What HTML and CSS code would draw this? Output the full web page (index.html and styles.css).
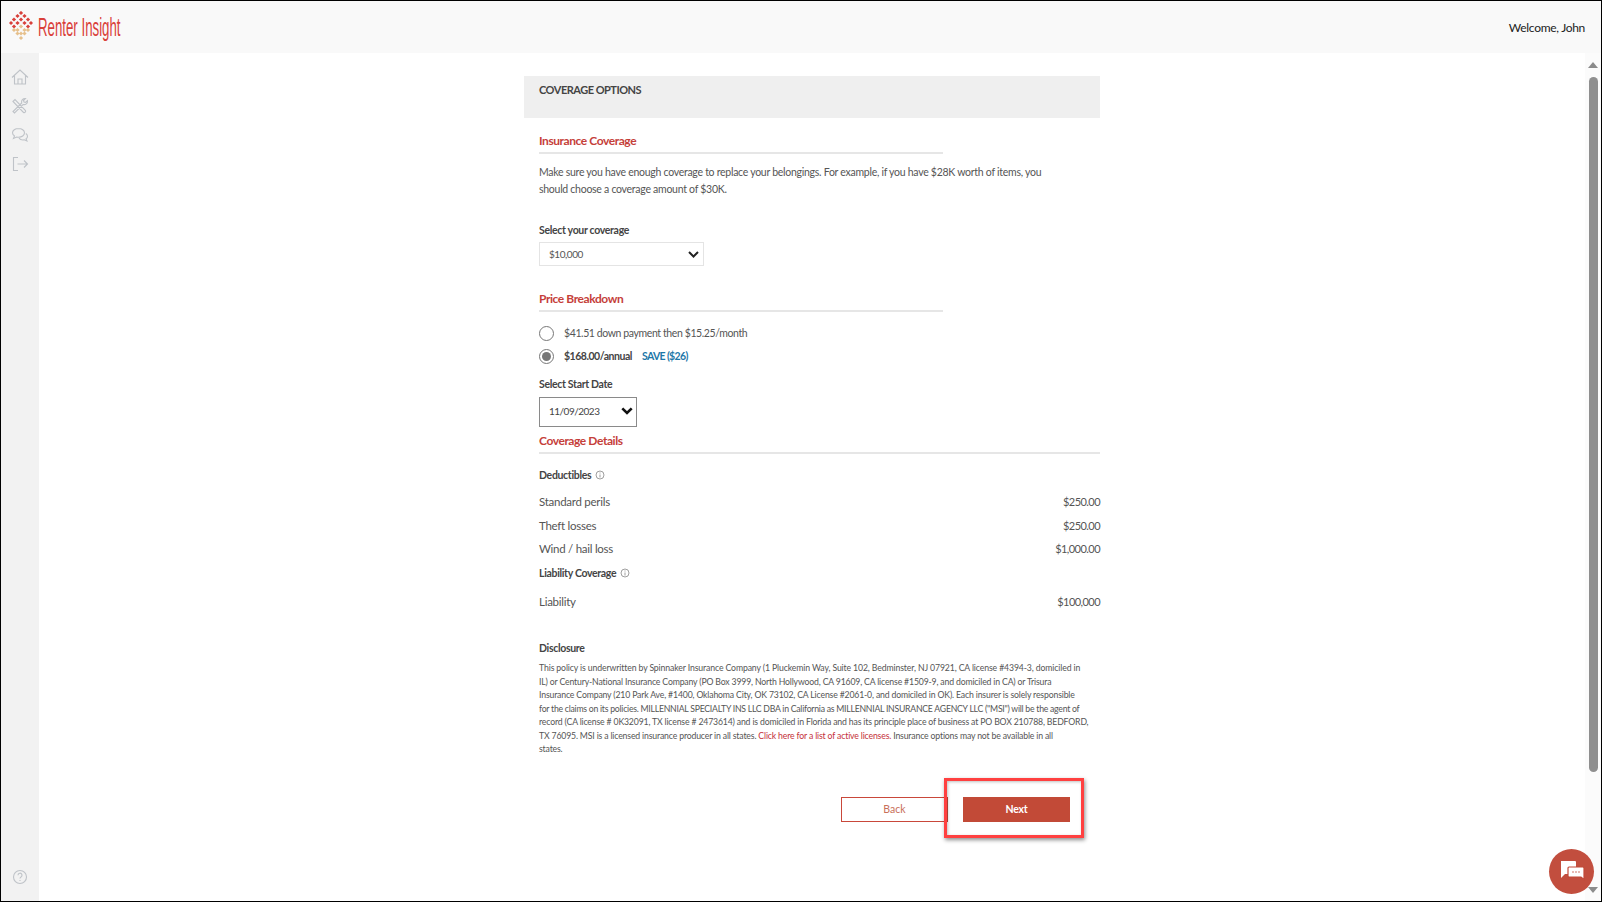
FILE: index.html
```html
<!DOCTYPE html>
<html lang="en">
<head>
<meta charset="utf-8">
<title>Renter Insight</title>
<link rel="stylesheet" href="styles.css">
</head>
<body>
<div class="app">
  <header class="topbar">
    <div class="brand">
      <svg class="logo" width="24" height="30" viewBox="0 0 24 30">
        <g fill="#d8403a">
          <rect x="10.500" y="0.500" width="3" height="3" transform="rotate(45 12 2)"/>
          <rect x="7" y="3.500" width="3" height="3" transform="rotate(45 8.500 5)"/>
          <rect x="14" y="3.500" width="3" height="3" transform="rotate(45 15.500 5)"/>
          <rect x="3.500" y="7" width="3" height="3" transform="rotate(45 5 8.500)"/>
          <rect x="10.500" y="7" width="3" height="3" transform="rotate(45 12 8.500)"/>
          <rect x="17.500" y="7" width="3" height="3" transform="rotate(45 19 8.500)"/>
          <rect x="0.500" y="10.500" width="3" height="3" transform="rotate(45 2 12)"/>
          <rect x="7" y="10.500" width="3" height="3" transform="rotate(45 8.500 12)"/>
          <rect x="14" y="10.500" width="3" height="3" transform="rotate(45 15.500 12)"/>
          <rect x="20.500" y="10.500" width="3" height="3" transform="rotate(45 22 12)"/>
          <rect x="3.500" y="14" width="3" height="3" transform="rotate(45 5 15.500)"/>
          <rect x="17.500" y="14" width="3" height="3" transform="rotate(45 19 15.500)"/>
        </g>
        <g fill="#e6c08c">
          <rect x="10.500" y="14" width="3" height="3" transform="rotate(45 12 15.500)"/>
          <rect x="3.500" y="17.500" width="3" height="3" transform="rotate(45 5 19)"/>
          <rect x="7" y="17.500" width="3" height="3" transform="rotate(45 8.500 19)"/>
          <rect x="14" y="17.500" width="3" height="3" transform="rotate(45 15.500 19)"/>
          <rect x="17.500" y="17.500" width="3" height="3" transform="rotate(45 19 19)"/>
          <rect x="7" y="21" width="3" height="3" transform="rotate(45 8.500 22.500)"/>
          <rect x="10.500" y="21" width="3" height="3" transform="rotate(45 12 22.500)"/>
          <rect x="14" y="21" width="3" height="3" transform="rotate(45 15.500 22.500)"/>
          <rect x="10.500" y="25.500" width="3" height="3" transform="rotate(45 12 27)"/>
        </g>
      </svg>
      <span class="brand-name">Renter Insight</span>
    </div>
    <span class="welcome">Welcome, John</span>
  </header>
  <div class="body-row">
    <nav class="sidebar">
      <div class="nav-top">
        <svg class="nav-icon" viewBox="0 0 18 18"><path d="M1 9.500 9 2l8 7.500M3.500 7.500V16h11V7.500M7 16v-5h4v5"/></svg>
        <svg class="nav-icon" viewBox="0 0 18 18"><path d="M2 4.500 4 2.500l10.500 11a1.500 1.500 0 0 1-2 2zM14.500 1.500a3.500 3.500 0 0 0-3.800 4.500L2 14.500 3.500 16 12 7.500a3.500 3.500 0 0 0 4.500-3.800L14.500 5.500l-1.500-.5-.5-1.500z"/></svg>
        <svg class="nav-icon" viewBox="0 0 18 18"><path d="M7.500 2.500c-3.300 0-6 1.900-6 4.300 0 1.300.8 2.400 2 3.200L2.500 12.500l3.200-1.500c.6.100 1.200.2 1.800.2 3.300 0 6-1.900 6-4.400s-2.700-4.300-6-4.300zM14.800 7.500c1.100.7 1.700 1.700 1.700 2.800 0 1-.5 1.900-1.400 2.500l.8 2.200-2.600-1.200c-2.200.4-4.300-.3-5.300-1.700"/></svg>
        <svg class="nav-icon" viewBox="0 0 18 18"><path d="M7 2.500H2.500v13H7M6.500 9h10M13 5.500 16.500 9 13 12.500"/></svg>
      </div>
      <svg class="nav-icon" viewBox="0 0 18 18"><circle cx="9" cy="9" r="6.500"/><path d="M7 7.200a2 2 0 1 1 3 1.700c-.7.400-1 .8-1 1.600M9 12v1"/></svg>
    </nav>
    <main class="content">
      <div class="column">
        <div class="card-title"><h1>COVERAGE OPTIONS</h1></div>
        <section class="pad">
          <h2 class="section-head narrow">Insurance Coverage</h2>
          <p class="intro">Make sure you have enough coverage to replace your belongings. For example, if you have $28K worth of items, you should choose a coverage amount of $30K.</p>
          <div class="label label-coverage">Select your coverage</div>
          <div class="select">
            <span>$10,000</span>
            <svg width="11" height="7" viewBox="0 0 11 7"><path d="M1 1l4.500 4.500L10 1" fill="none" stroke="#222" stroke-width="2"/></svg>
          </div>
          <h2 class="section-head narrow head-price">Price Breakdown</h2>
          <div class="radio-row first">
            <span class="radio"></span>
            <span class="pay">$41.51 down payment then $15.25/month</span>
          </div>
          <div class="radio-row">
            <span class="radio on"></span>
            <span class="semi">$168.00/annual</span>
            <span class="save">SAVE ($26)</span>
          </div>
          <div class="label label-date">Select Start Date</div>
          <div class="date">
            <span>11/09/2023</span>
            <svg width="12" height="8" viewBox="0 0 12 8"><path d="M1.300 1.300 6 6l4.700-4.700" fill="none" stroke="#111" stroke-width="2.600"/></svg>
          </div>
          <h2 class="section-head head-details">Coverage Details</h2>
          <div class="sub-head deduct">Deductibles
            <svg class="info" viewBox="0 0 10 10"><circle cx="5" cy="5" r="4"/><path d="M5 4.500v3M5 2.500v1"/></svg>
          </div>
          <div class="line l1"><span>Standard perils</span><span class="amt">$250.00</span></div>
          <div class="line l2"><span>Theft losses</span><span class="amt">$250.00</span></div>
          <div class="line l2b"><span>Wind / hail loss</span><span class="amt">$1,000.00</span></div>
          <div class="sub-head liab">Liability Coverage
            <svg class="info" viewBox="0 0 10 10"><circle cx="5" cy="5" r="4"/><path d="M5 4.500v3M5 2.500v1"/></svg>
          </div>
          <div class="line l3"><span>Liability</span><span class="amt">$100,000</span></div>
          <div class="sub-head disc-head">Disclosure</div>
          <div class="disclosure">
            <div class="dl dl-wide">This policy is underwritten by Spinnaker Insurance Company (1 Pluckemin Way, Suite 102, Bedminster, NJ 07921, CA license #4394-3, domiciled in</div>
            <div class="dl">IL) or Century-National Insurance Company (PO Box 3999, North Hollywood, CA 91609, CA license #1509-9, and domiciled in CA) or Trisura</div>
            <div class="dl">Insurance Company (210 Park Ave, #1400, Oklahoma City, OK 73102, CA License #2061-0, and domiciled in OK). Each insurer is solely responsible</div>
            <div class="dl dl-caps">for the claims on its policies. MILLENNIAL SPECIALTY INS LLC DBA in California as MILLENNIAL INSURANCE AGENCY LLC ("MSI") will be the agent of</div>
            <div class="dl">record (CA license # 0K32091, TX license # 2473614) and is domiciled in Florida and has its principle place of business at PO BOX 210788, BEDFORD,</div>
            <div class="dl">TX 76095. MSI is a licensed insurance producer in all states. <a href="#">Click here for a list of active licenses.</a> Insurance options may not be available in all</div>
            <div class="dl">states.</div>
          </div>
          <div class="actions">
            <button class="btn back" type="button">Back</button>
            <button class="btn next" type="button">Next</button>
            <span class="highlight"></span>
          </div>
        </section>
      </div>
    </main>
    <div class="scrollbar">
      <span class="arrow up"></span>
      <span class="track"><span class="thumb"></span></span>
      <span class="arrow down"></span>
    </div>
  </div>
  <div class="chat">
    <svg width="26" height="24" viewBox="0 0 26 24">
      <path d="M2 1h14a1 1 0 0 1 1 1v11a1 1 0 0 1-1 1H6l-4 4z" fill="#fff"/>
      <path d="M10 7h14a1 1 0 0 1 1 1v11.500l-3-2.500H10a1 1 0 0 1-1-1V8a1 1 0 0 1 1-1z" fill="#fff" stroke="#c24a39" stroke-width="1.200"/>
      <g fill="#e2a49b"><circle cx="14" cy="12" r="1"/><circle cx="17" cy="12" r="1"/><circle cx="20" cy="12" r="1"/></g>
    </svg>
  </div>
</div>
</body>
</html>
```

FILE: styles.css
```css
* { box-sizing: border-box; }
html, body { margin: 0; height: 100%; overflow: hidden; background: #fff; }
body { font-family: Lato, "Noto Sans", sans-serif; color: #555; font-size: 10.500px; }

.app {
  position: relative;
  width: 1602px;
  height: 902px;
  border: 1px solid #000;
  display: flex;
  flex-direction: column;
}

.topbar {
  height: 52px;
  background: #f9f9f9;
  display: flex;
  align-items: center;
  justify-content: space-between;
  padding: 0 16px 0 8px;
  flex: none;
}
.brand { display: flex; align-items: center; gap: 5px; }
.logo { display: block; margin-top: -3px; }
.brand-name {
  font-family: "Liberation Sans", sans-serif;
  font-size: 25px;
  color: #d9403a;
  transform: scaleX(0.53);
  transform-origin: left center;
  white-space: nowrap;
  width: 84px;
}
.welcome { font-size: 12px; letter-spacing: -0.3px; color: #222; }

.body-row { flex: 1; display: flex; min-height: 0; }

.sidebar {
  width: 38px;
  flex: none;
  background: #f2f2f2;
  display: flex;
  flex-direction: column;
  justify-content: space-between;
  align-items: center;
  padding: 15px 0 15px;
}
.nav-top { display: flex; flex-direction: column; gap: 11px; }
.nav-icon {
  display: block;
  width: 18px;
  height: 18px;
  fill: none;
  stroke: #bfc3c8;
  stroke-width: 1.100;
}

.content { flex: 1; display: flex; justify-content: center; padding-top: 23px; min-width: 0; }
.column { width: 576px; }

.card-title { height: 42px; background: #efefef; padding: 5px 15px; }
.card-title h1 { margin: 0; font-size: 11px; letter-spacing: -0.5px; line-height: 17px; font-weight: 700; color: #444; }

.pad { padding: 0 0 0 15px; }

.section-head {
  margin: 0;
  font-size: 12px;
  letter-spacing: -0.42px;
  line-height: 17px;
  font-weight: 700;
  color: #c5403a;
  border-bottom: 2px solid #e6e6e6;
  padding: 1px 0 0;
  height: 23px;
}
.narrow { width: 404px; }
.pad > .section-head:first-child { margin-top: 13px; }
.intro { margin: 10px 0 0; width: 505px; font-size: 10.500px; letter-spacing: -0.27px; line-height: 17px; }
.label, .sub-head { font-size: 10.500px; letter-spacing: -0.32px; line-height: 16px; font-weight: 700; color: #444; }
.label-coverage { margin-top: 24px; }

.select {
  margin-top: 4px;
  width: 165px;
  height: 24px;
  border: 1px solid #e4e4e4;
  display: flex;
  align-items: center;
  justify-content: space-between;
  padding: 0 4px 0 9px;
  font-size: 10px;
  letter-spacing: -0.45px;
}

.head-price { margin-top: 23px; }

.radio-row { display: flex; align-items: center; height: 15px; gap: 10px; margin-top: 8px; }
.radio-row.first { margin-top: 14px; }
.radio-row > span:not(.radio) { margin-top: -2px; }
.radio { width: 15px; height: 15px; border: 1px solid #777; border-radius: 50%; background: #fff; flex: none; position: relative; }
.radio.on::after { content: ""; position: absolute; inset: 2px; border-radius: 50%; background: #777; }
.pay { letter-spacing: -0.4px; }
.semi { font-weight: 700; color: #444; letter-spacing: -0.47px; }
.save { color: #1d77a8; font-weight: 700; letter-spacing: -0.65px; }

.label-date { margin-top: 12px; }
.date {
  margin-top: 5px;
  width: 98px;
  height: 30px;
  border: 1px solid #8a8a8a;
  display: flex;
  align-items: center;
  justify-content: space-between;
  padding: 0 3px 2px 9px;
  font-size: 10px;
  letter-spacing: -0.5px;
  color: #444;
}
.head-details { margin-top: 4px; }

.sub-head { display: flex; align-items: center; gap: 4px; }
.info { width: 10px; height: 10px; fill: none; stroke: #777; stroke-width: 0.700; }
.deduct { margin-top: 13px; }

.line { display: flex; justify-content: space-between; font-size: 11.500px; letter-spacing: -0.27px; line-height: 16px; }
.amt { font-size: 11px; letter-spacing: -0.55px; }
.l1 { margin-top: 11px; }
.l2 { margin-top: 8px; }
.l2b { margin-top: 7px; }
.liab { margin-top: 8px; }
.l3 { margin-top: 13px; }

.disc-head { margin-top: 30px; }
.disclosure { margin: 5px 0 0; font-size: 8.700px; line-height: 13.500px; }
.dl { white-space: nowrap; letter-spacing: -0.16px; }
.dl-wide { letter-spacing: -0.12px; }
.dl-caps { letter-spacing: -0.25px; }
.disclosure a { color: #c5303a; text-decoration: none; }

.actions {
  position: relative;
  margin-top: 41.500px;
  display: flex;
  padding-left: 302px;
  gap: 15px;
}
.btn { height: 25px; width: 107px; font: inherit; font-size: 10.500px; padding: 0 0 2px; }
.back { background: #fff; border: 1px solid #c9483a; color: #c9705a; }
.next { background: #c24a37; border: 0; color: #fff; font-weight: 700; letter-spacing: -0.2px; }
.highlight {
  position: absolute;
  left: 405px;
  top: -19px;
  width: 140px;
  height: 60px;
  border: 3px solid #ff4040;
  box-shadow: 1px 2px 4px rgba(0, 0, 0, 0.45), inset 1px 1px 3px rgba(0, 0, 0, 0.25);
}

.scrollbar {
  width: 16px;
  flex: none;
  background: #fbfbfb;
  display: flex;
  flex-direction: column;
  align-items: center;
  padding: 9px 0 8px;
}
.arrow { width: 0; height: 0; border-left: 5px solid transparent; border-right: 5px solid transparent; flex: none; }
.up { border-bottom: 6px solid #8b8b8b; }
.down { border-top: 6px solid #8b8b8b; }
.track { flex: 1; width: 9px; padding-top: 9px; }
.thumb { display: block; width: 9px; height: 695px; background: #8f8f8f; border-radius: 5px; }

.chat {
  position: absolute;
  right: 7px;
  bottom: 7px;
  width: 45px;
  height: 45px;
  border-radius: 50%;
  background: #c24e3e;
  display: flex;
  align-items: center;
  justify-content: center;
}
```
